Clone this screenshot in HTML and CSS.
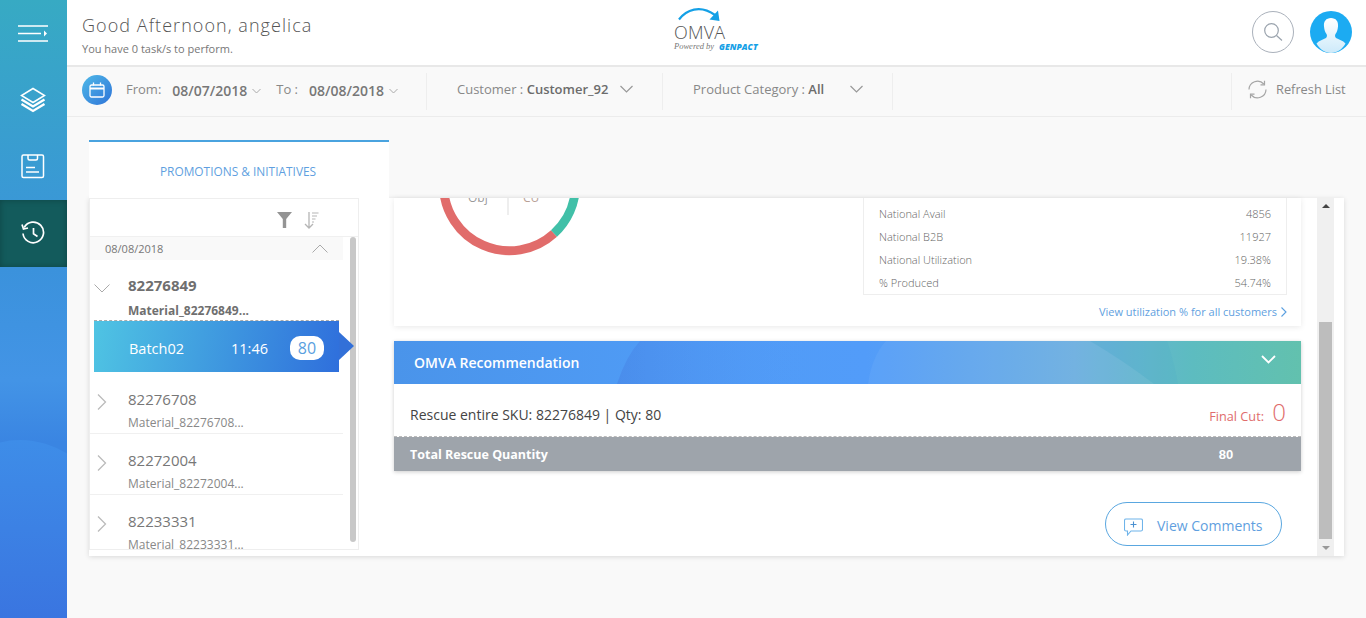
FILE: index.html
```html
<!DOCTYPE html>
<html lang="en">
<head>
    <meta charset="UTF-8">
    <title>OMVA</title>
    <link rel="stylesheet" href="styles.css">
</head>
<body>
    <aside class="sidebar">
        <div class="side-item">
            <svg width="30" height="17" viewBox="0 0 30 17"><path d="M0 1h30M0 8.500h23M0 16h30" stroke="#fff" stroke-width="1.500" fill="none"/><path d="M26 5.500l3 3-3 3z" fill="#fff"/></svg>
        </div>
        <div class="side-item">
            <svg width="26" height="26" viewBox="0 0 26 26"><path d="M13 1.500l11.500 7-11.500 7-11.500-7z" fill="none" stroke="#fff" stroke-width="1.500"/><path d="M1.500 12.500l11.500 7 11.500-7" fill="none" stroke="#fff" stroke-width="2.300"/><path d="M1.500 17l11.500 7 11.500-7" fill="none" stroke="#fff" stroke-width="2.300"/></svg>
        </div>
        <div class="side-item">
            <svg width="24" height="25" viewBox="0 0 24 25" fill="none" stroke="#fff"><rect x="1" y="1" width="21.500" height="22.500" rx="1.500" stroke-width="1.500"/><path d="M7 1v3.500q0 1.500 1.500 1.500h6.500q1.500 0 1.500-1.500V1" stroke-width="1.500"/><path d="M5 13.500h9M5 18h13" stroke-width="1.300"/></svg>
        </div>
        <div class="side-item active">
            <svg width="24" height="24" viewBox="0 0 24 24" fill="none" stroke="#fff" stroke-width="1.700"><path d="M3.200 6.500A10.300 10.300 0 1 1 2 12.500"/><path d="M1 3.500l1.500 4.500 4.500-1"/><path d="M12.500 7v5.800l4 2.700"/></svg>
        </div>
    </aside>

    <div class="main">
        <header class="topbar">
            <div class="greeting">
                <div class="hello">Good Afternoon, angelica</div>
                <div class="tasks">You have 0 task/s to perform.</div>
            </div>
            <div class="logo">
                <svg class="logo-arrow" width="44" height="16" viewBox="0 0 44 16"><path d="M1 14.500C8 5 22 -1 37 10" fill="none" stroke="#14a0e6" stroke-width="2.200"/><path d="M41.500 16l-10-1.500 8.500-9z" fill="#14a0e6"/></svg>
                <div class="logo-name">OMVA</div>
                <div class="logo-sub"><span class="powered">Powered by</span> <span class="genpact">GENPACT</span></div>
            </div>
            <div class="top-actions">
                <div class="search-btn">
                    <svg width="20" height="20" viewBox="0 0 20 20" fill="none" stroke="#9aa3ad" stroke-width="1.200"><circle cx="8.500" cy="8.500" r="6.800"/><path d="M13.500 13.500l5.500 5"/></svg>
                </div>
                <div class="avatar">
                    <svg width="42" height="42" viewBox="0 0 42 42"><defs><linearGradient id="fig" x1="0" y1="0" x2="0" y2="1"><stop offset="0" stop-color="#fff"/><stop offset="1" stop-color="#cdeafa"/></linearGradient></defs><circle cx="21" cy="21" r="21" fill="#1cabf2"/><path d="M21 7c-5 0-7.500 3.500-7 8.500.3 3 1 5.500 2.500 7.500.7 1 .7 3-.5 4-2.500 1.500-7 2.500-9.500 5.500C10 38.500 15 42 21 42s11-3.500 14.500-9.500c-2.500-3-7-4-9.500-5.500-1.200-1-1.200-3-.5-4 1.500-2 2.200-4.500 2.500-7.500.5-5-2-8.500-7-8.500z" fill="url(#fig)"/></svg>
                </div>
            </div>
        </header>

        <div class="toolbar">
            <div class="dates">
                <div class="cal-icon">
                    <svg width="16" height="16" viewBox="0 0 16 16" fill="none" stroke="#fff"><rect x="1" y="3" width="14" height="12" rx="1.500" stroke-width="1.300"/><path d="M1 6.500h14" stroke-width="2"/><path d="M4.500 .5v3M11.500 .5v3" stroke-width="1.300"/></svg>
                </div>
                <span class="lbl from-lbl">From:</span>
                <span class="date">08/07/2018</span>
                <svg class="chev-sm" width="9" height="6" viewBox="0 0 9 6"><path d="M.5 1l4 4 4-4" fill="none" stroke="#aaa"/></svg>
                <span class="lbl to-lbl">To :</span>
                <span class="date">08/08/2018</span>
                <svg class="chev-sm" width="9" height="6" viewBox="0 0 9 6"><path d="M.5 1l4 4 4-4" fill="none" stroke="#aaa"/></svg>
            </div>
            <div class="filter customer">
                <span class="lbl">Customer : <b>Customer_92</b></span>
                <svg width="13" height="8" viewBox="0 0 13 8"><path d="M.5 1l6 6 6-6" fill="none" stroke="#999" stroke-width="1.200"/></svg>
            </div>
            <div class="filter category">
                <span class="lbl">Product Category : <b>All</b></span>
                <svg width="13" height="8" viewBox="0 0 13 8"><path d="M.5 1l6 6 6-6" fill="none" stroke="#999" stroke-width="1.200"/></svg>
            </div>
            <div class="refresh">
                <svg width="19" height="19" viewBox="0 0 19 19" fill="none" stroke="#a5a5a5" stroke-width="1.200"><path d="M1 9.500A8.500 8.500 0 0 1 15.800 4"/><path d="M16.500 .8v4h-4"/><path d="M18 9.500A8.500 8.500 0 0 1 3.200 15"/><path d="M2.500 18.200v-4h4"/></svg>
                <span class="lbl">Refresh List</span>
            </div>
        </div>

        <div class="content">
            <div class="tab">PROMOTIONS &amp; INITIATIVES</div>
            <div class="panel">
                <div class="list-panel">
                    <div class="list-tools">
                        <svg width="15" height="16" viewBox="0 0 15 16"><path d="M0 0h15L9.200 7v9H5.800V7z" fill="#949494"/></svg>
                        <svg width="15" height="17" viewBox="0 0 15 17" fill="none" stroke="#b5b5b5"><path d="M5 0v16M1 12l4 4 4-4" stroke-width="1.300"/><path d="M8 1h6.500M8 4h5M8 7h3.500M8 10h2" stroke-width="1.200"/></svg>
                    </div>
                    <div class="list-body">
                        <div class="list-rows">
                            <div class="date-row">
                                <span>08/08/2018</span>
                                <svg width="16" height="9" viewBox="0 0 16 9"><path d="M.5 8.500l7.500-7.500 7.500 7.500" fill="none" stroke="#aaa"/></svg>
                            </div>
                            <div class="sku open">
                                <svg class="sku-chev" width="16" height="9" viewBox="0 0 16 9"><path d="M.5 .5l7.500 7.500 7.500-7.500" fill="none" stroke="#aaa"/></svg>
                                <div class="sku-num">82276849</div>
                                <div class="sku-name">Material_82276849...</div>
                            </div>
                            <div class="batch">
                                <span class="batch-name">Batch02</span>
                                <span class="batch-time">11:46</span>
                                <span class="batch-qty">80</span>
                            </div>
                            <div class="sku">
                                <svg class="sku-chev" width="10" height="16" viewBox="0 0 10 16"><path d="M1 .5l7.500 7.500-7.500 7.500" fill="none" stroke="#bbb" stroke-width="1.300"/></svg>
                                <div class="sku-num">82276708</div>
                                <div class="sku-name">Material_82276708...</div>
                            </div>
                            <div class="sku">
                                <svg class="sku-chev" width="10" height="16" viewBox="0 0 10 16"><path d="M1 .5l7.500 7.500-7.500 7.500" fill="none" stroke="#bbb" stroke-width="1.300"/></svg>
                                <div class="sku-num">82272004</div>
                                <div class="sku-name">Material_82272004...</div>
                            </div>
                            <div class="sku">
                                <svg class="sku-chev" width="10" height="16" viewBox="0 0 10 16"><path d="M1 .5l7.500 7.500-7.500 7.500" fill="none" stroke="#bbb" stroke-width="1.300"/></svg>
                                <div class="sku-num">82233331</div>
                                <div class="sku-name">Material_82233331...</div>
                            </div>
                        </div>
                        <div class="list-scroll"></div>
                    </div>
                </div>

                <div class="detail">
                    <div class="detail-inner">
                        <div class="card stats">
                            <svg class="donut" width="150" height="60" viewBox="0 0 150 60">
                                <path d="M8.500 -13A66 66 0 0 0 119 35.500" fill="none" stroke="#e16c6b" stroke-width="9"/>
                                <path d="M119 35.500A66 66 0 0 0 140.500 -13" fill="none" stroke="#41c0a8" stroke-width="9"/>
                                <path d="M73 0v17" stroke="#ddd"/>
                                <text class="donut-text" x="33" y="4">Obj</text>
                                <text class="donut-text cu" x="88" y="4">CU</text>
                            </svg>
                            <div class="stats-side">
                                <div class="stats-box">
                                    <div class="stat-row"><span>National Avail</span><span>4856</span></div>
                                    <div class="stat-row"><span>National B2B</span><span>11927</span></div>
                                    <div class="stat-row"><span>National Utilization</span><span>19.38%</span></div>
                                    <div class="stat-row"><span>% Produced</span><span>54.74%</span></div>
                                </div>
                                <div class="util-link">View utilization % for all customers
                                    <svg width="6" height="10" viewBox="0 0 6 10"><path d="M.5 .5l4.500 4.500-4.500 4.500" fill="none" stroke="#5a9fe0" stroke-width="1.100"/></svg>
                                </div>
                            </div>
                        </div>

                        <div class="rec">
                            <div class="rec-head">
                                <svg class="rec-bg" width="907" height="43" viewBox="0 0 907 43" preserveAspectRatio="none"><defs><linearGradient id="sw" x1="0" y1="0" x2="1" y2="0"><stop offset="0" stop-color="#3f6fd8" stop-opacity=".3"/><stop offset="1" stop-color="#5a9cf8" stop-opacity="0"/></linearGradient></defs><path d="M223 43Q232 15 246 0H420V43z" fill="url(#sw)"/><path d="M474 43Q478 15 492 0H773Q780 20 784 43z" fill="#fff" fill-opacity=".05"/><path d="M696 0Q730 20 760 43H784Q780 20 773 0z" fill="#0d8fb8" fill-opacity=".13"/></svg>
                                <span class="rec-title">OMVA Recommendation</span>
                                <svg class="rec-chev" width="15" height="9" viewBox="0 0 15 9"><path d="M1 1l6.500 6.500L14 1" fill="none" stroke="#fff" stroke-width="1.800"/></svg>
                            </div>
                            <div class="rec-body">
                                <span class="rescue">Rescue entire SKU: 82276849 | Qty: 80</span>
                                <span class="final">Final Cut: <em>0</em></span>
                            </div>
                            <div class="rec-total">
                                <span>Total Rescue Quantity</span>
                                <span class="total-num">80</span>
                            </div>
                        </div>

                        <div class="comments-wrap">
                            <div class="comments-btn">
                                <svg width="19" height="18" viewBox="0 0 19 18" fill="none" stroke="#6fb4ea" stroke-width="1.100"><path d="M2 1h15q1.500 0 1.500 1.500v9q0 1.500-1.500 1.500H7l-3.500 4V13H2Q.5 13 .5 11.500v-9Q.5 1 2 1z"/><path d="M9.500 3.500v6M6.500 6.500h6" stroke="#4a90d0"/></svg>
                                <span>View Comments</span>
                            </div>
                        </div>
                    </div>
                    <div class="scrollbar">
                        <span class="arrow up"></span>
                        <div class="track"><div class="thumb"></div></div>
                        <span class="arrow down"></span>
                    </div>
                </div>
            </div>
        </div>
    </div>
</body>
</html>
```

FILE: styles.css
```css
* {
    box-sizing: border-box;
}
html, body {
    height: 100%;
}
body {
    margin: 0;
    display: flex;
    overflow: hidden;
    background: #f9f9f9;
    color: #777;
    font-family: 'Open Sans', Arial, sans-serif;
}
svg {
    display: block;
    flex: none;
}

/* sidebar */
.sidebar {
    position: relative;
    overflow: hidden;
    width: 67px;
    flex: none;
    background: linear-gradient(180deg, #37aac3 0, #3b92dc 270px, #4394e6 380px, #3a85e2 442px);
}
.sidebar::after {
    content: "";
    position: absolute;
    left: -110px;
    top: 440px;
    width: 260px;
    height: 400px;
    border-radius: 50%;
    background: linear-gradient(180deg, #3e8de8 0, #3a75e0 178px);
}
.side-item {
    position: relative;
    z-index: 1;
    height: 66.67px;
    display: flex;
    align-items: center;
    justify-content: center;
    padding-right: 1px;
}
.side-item.active {
    background: #135b5c;
    box-shadow: inset 0 0 6px rgba(0,0,0,0.25);
}

/* header */
.main {
    flex: 1;
    min-width: 0;
    display: flex;
    flex-direction: column;
}
.topbar {
    height: 67px;
    flex: none;
    background: #fff;
    border-bottom: 2px solid #e8e8e8;
    display: grid;
    grid-template-columns: 1fr auto 1fr;
    align-items: center;
    padding: 0 14px 0 15px;
}
.greeting {
    padding-top: 4px;
}
.hello {
    font-size: 18px;
    font-weight: 300;
    letter-spacing: 1.05px;
    line-height: 24px;
    color: #555;
    margin-top: -1px;
}
.tasks {
    font-size: 11px;
    line-height: 15px;
    margin-top: 4px;
    color: #777;
}
.logo {
    width: 86px;
    height: 56px;
    margin-top: 1px;
}
.logo-arrow {
    margin: 0 0 0 4px;
}
.logo-name {
    font-size: 18px;
    font-weight: 300;
    line-height: 18px;
    color: #555;
    letter-spacing: 0.2px;
    margin-top: 2px;
}
.logo-sub {
    display: flex;
    gap: 5px;
    align-items: center;
    line-height: 11px;
    white-space: nowrap;
}
.powered {
    font-family: 'Liberation Serif', serif;
    font-style: italic;
    font-size: 8.500px;
    color: #777;
}
.genpact {
    font-size: 8.500px;
    font-weight: 800;
    font-style: italic;
    color: #14a0e6;
}
.top-actions {
    display: flex;
    justify-content: flex-end;
    gap: 16px;
    margin-top: -2px;
}
.search-btn {
    width: 42px;
    height: 42px;
    border: 1px solid #aab1bb;
    border-radius: 50%;
    display: flex;
    align-items: center;
    justify-content: center;
}
.avatar {
    width: 42px;
    height: 42px;
}

/* toolbar */
.toolbar {
    height: 50px;
    flex: none;
    background: #f9f9f9;
    border-bottom: 1px solid #ececec;
    display: flex;
    align-items: center;
    font-size: 13px;
}
.lbl {
    color: #888;
    white-space: nowrap;
}
.lbl b {
    font-weight: 600;
    color: #6c6c6c;
}
.dates {
    width: 360px;
    height: 37px;
    border-right: 1px solid #eee;
    padding: 0 0 3px 15px;
    display: flex;
    align-items: center;
}
.cal-icon {
    width: 30px;
    height: 30px;
    border-radius: 50%;
    background: linear-gradient(135deg, #4fb9e8, #2f74d8);
    display: flex;
    align-items: center;
    justify-content: center;
    margin-right: 14px;
}
.from-lbl {
    margin: 0 11px 2px 0;
}
.to-lbl {
    margin: 0 11px 2px 0;
}
.date {
    font-size: 14px;
    font-weight: 600;
    color: #777;
}
.chev-sm {
    margin: 2px 15px 0 5px;
}
.filter {
    height: 37px;
    border-right: 1px solid #eee;
    display: flex;
    align-items: center;
    padding: 0 0 5px 30px;
}
.customer {
    width: 236px;
    gap: 12px;
}
.category {
    width: 230px;
    gap: 26px;
}
.refresh {
    height: 37px;
    margin-left: auto;
    width: 135px;
    border-left: 1px solid #eee;
    display: flex;
    align-items: center;
    gap: 9px;
    padding: 0 0 5px 16px;
}
.refresh .lbl {
    font-size: 12.800px;
}

/* promotions panel */
.content {
    flex: 1;
    padding: 23px 22px 0;
}
.tab {
    position: relative;
    z-index: 1;
    width: 300px;
    height: 58px;
    background: #fff;
    border-top: 2px solid #4aa3df;
    display: flex;
    align-items: center;
    justify-content: center;
    font-size: 11.900px;
    color: #5f9fe0;
    padding: 2px 2px 0 0;
}
.panel {
    height: 358px;
    background: #fff;
    box-shadow: 0 1px 5px rgba(0,0,0,0.13);
    display: flex;
    align-items: flex-start;
}
.list-panel {
    width: 270px;
    height: 352px;
    flex: none;
    border: 1px solid #eee;
    overflow: hidden;
}
.list-tools {
    height: 38px;
    border-bottom: 1px solid #f0f0f0;
    display: flex;
    justify-content: flex-end;
    align-items: flex-start;
    gap: 12px;
    padding: 13px 39px 0 0;
}
.list-body {
    display: flex;
    height: 314px;
}
.list-rows {
    width: 253px;
    flex: none;
}
.list-scroll {
    width: 6px;
    height: 305px;
    margin-left: 7px;
    background: #c8c8c8;
    border-radius: 3px;
}
.date-row {
    height: 23px;
    background: #f9f9f9;
    display: flex;
    align-items: center;
    justify-content: space-between;
    padding: 0 15px;
    font-size: 11px;
    color: #777;
}
.sku {
    position: relative;
    height: 61px;
    border-bottom: 1px solid #f0f0f0;
    padding: 15px 0 0 38px;
}
.sku.open {
    padding-top: 14px;
    border-bottom: 0;
}
.sku.open::after {
    content: "";
    position: absolute;
    left: 4px;
    right: 4px;
    bottom: 0;
    border-bottom: 1px dashed #aaa;
}
.sku-chev {
    position: absolute;
    left: 7px;
    top: 21px;
}
.sku.open .sku-chev {
    left: 4px;
    top: 24px;
}
.sku-num {
    font-size: 15px;
    line-height: 22px;
    color: #777;
}
.sku-name {
    font-size: 12px;
    line-height: 17px;
    margin-top: 4px;
    color: #888;
}
.open .sku-num,
.open .sku-name {
    font-weight: 700;
    color: #6f6f6f;
}
.open .sku-name {
    margin-top: 6px;
}
.batch {
    position: relative;
    height: 51px;
    margin: 0 4px 1px;
    background: linear-gradient(100deg, #4fc4e3, #2f6fdc);
    display: flex;
    align-items: center;
    color: #fff;
    font-size: 14.500px;
    padding: 3px 0 0 35px;
}
.batch::after {
    content: "";
    position: absolute;
    left: 100%;
    top: 11px;
    border-left: 15px solid #3270d8;
    border-top: 14px solid transparent;
    border-bottom: 14px solid transparent;
}
.batch-name {
    width: 102px;
}
.batch-time {
    width: 59px;
}
.batch-qty {
    width: 34px;
    height: 24px;
    background: #fff;
    border-radius: 10px;
    color: #5a9fe0;
    font-size: 16px;
    display: flex;
    align-items: center;
    justify-content: center;
}

/* detail side */
.detail {
    flex: 1;
    min-width: 0;
    height: 358px;
    display: flex;
    padding-right: 10px;
}
.detail-inner {
    flex: 1;
    min-width: 0;
    padding: 0 16px 0 35px;
}
.card.stats {
    height: 128px;
    background: #fff;
    box-shadow: 0 1px 6px rgba(0,0,0,0.09);
    display: flex;
    justify-content: space-between;
    padding: 0 14px 0 41px;
}
.donut-text {
    font-size: 12px;
    fill: #999;
}
.donut-text.cu {
    fill: #b8a196;
}
.stats-side {
    width: 424px;
}
.stats-box {
    height: 97px;
    border-left: 1px solid #eee;
    border-right: 1px solid #eee;
    border-bottom: 1px solid #eee;
    padding: 4px 15px 0;
}
.stat-row {
    height: 23px;
    display: flex;
    align-items: center;
    justify-content: space-between;
    font-size: 11px;
    font-weight: 300;
    color: #666;
}
.util-link {
    display: flex;
    align-items: center;
    justify-content: flex-end;
    gap: 4px;
    margin-top: 10px;
    font-size: 11px;
    line-height: 14px;
    color: #5f9fe0;
}
.rec {
    margin-top: 15px;
    box-shadow: 0 1px 4px rgba(0,0,0,0.2);
}
.rec-head {
    position: relative;
    height: 43px;
    background: linear-gradient(90deg, #4a94ea 0, #4f9bf5 28%, #529cf9 52%, #6caee0 75%, #5dbcc0 88%, #62c1ae 100%);
    display: flex;
    align-items: center;
    justify-content: space-between;
    padding: 0 25px 0 20px;
}
.rec-bg {
    position: absolute;
    left: 0;
    top: 0;
}
.rec-title {
    position: relative;
    font-size: 14px;
    font-weight: 600;
    color: #fff;
}
.rec-chev {
    position: relative;
    margin-top: -6px;
}
.rec-body {
    height: 53px;
    background: #fff;
    border-bottom: 1px dashed #bbb;
    display: flex;
    align-items: center;
    justify-content: space-between;
    padding: 9px 15px 0 16px;
}
.rescue {
    font-size: 14px;
    color: #444;
}
.final {
    font-size: 12.700px;
    color: #e06c6c;
    margin-bottom: 6px;
}
.final em {
    font-style: normal;
    font-size: 24px;
    font-weight: 300;
    margin-left: 5px;
}
.rec-total {
    height: 34px;
    background: #9ea4ab;
    display: flex;
    align-items: center;
    padding: 0 16px;
    font-size: 12.500px;
    font-weight: 700;
    color: #fff;
}
.total-num {
    margin-left: 671px;
    font-family: 'Liberation Sans', Arial, sans-serif;
    font-size: 13px;
}
.comments-wrap {
    display: flex;
    justify-content: flex-end;
    padding: 31px 19px 0 0;
}
.comments-btn {
    width: 177px;
    height: 44px;
    border: 1px solid #5aa7e0;
    border-radius: 22px;
    display: flex;
    align-items: center;
    gap: 14px;
    padding: 6px 0 0 18px;
    font-size: 14px;
    color: #5f9fe0;
}
.comments-btn span {
    margin-bottom: 4px;
}
.scrollbar {
    width: 17px;
    flex: none;
    background: #f0f0f0;
    display: flex;
    flex-direction: column;
    align-items: center;
}
.arrow {
    width: 0;
    height: 0;
    flex: none;
    border-left: 4px solid transparent;
    border-right: 4px solid transparent;
}
.arrow.up {
    margin: 6px 0 5px;
    border-bottom: 4px solid #444;
}
.arrow.down {
    margin: 5px 0 6px;
    border-top: 4px solid #999;
}
.track {
    flex: 1;
    width: 13px;
}
.thumb {
    margin-top: 109px;
    height: 217px;
    background: #bdbdbd;
}
```
